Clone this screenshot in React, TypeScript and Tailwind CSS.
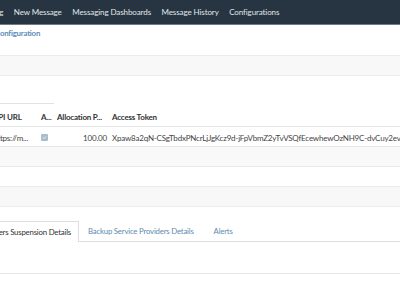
export default function App() {
  const navItems = ["New Message", "Messaging Dashboards", "Message History", "Configurations"];

  return (
    <div className="w-[400px] h-[284px] overflow-hidden bg-white font-['Lato',sans-serif] tracking-[-0.2px]">
      {/* Top nav */}
      <div className="h-[25px] bg-[#263541] border-b border-[#6d7c87] flex items-center gap-[10.5px] whitespace-nowrap text-[8px] tracking-[-0.1px] text-[#e1e7eb]">
        <span className="-ml-[33px]">Messaging</span>
        {navItems.map((item) => (
          <span key={item}>{item}</span>
        ))}
      </div>

      {/* Breadcrumb */}
      <div className="h-[30px] pt-[3px]">
        <span className="block -ml-[5px] text-[7.8px] font-bold text-[#5b8db8]">Configuration</span>
      </div>

      {/* Section header band */}
      <div className="h-[21px] bg-[#f8f8f8] border-y border-[#ececec]" />

      {/* Grid */}
      <div className="h-[28px] flex items-end">
        <div className="w-[54px] border-b border-[#e2e2e2]" />
      </div>
      <div className="-ml-[8px] whitespace-nowrap text-[8px] text-[#333]">
        <div className="grid grid-cols-[48px_16px_54px_1fr] h-[23px] pt-[3px] items-center border-b border-[#e6e6e6] font-bold">
          <span className="pl-[1px]">API URL</span>
          <span className="pl-[1px]">A...</span>
          <span className="pl-[1px]">Allocation P...</span>
          <span className="pl-[2px]">Access Token</span>
        </div>
        <div className="grid grid-cols-[48px_16px_54px_1fr] h-[20px] pt-[2px] items-center border-b border-[#e6e6e6] text-[#444]">
          <span className="pl-[1px]">https://m...</span>
          <span className="pl-[1px] flex">
            <span className="w-[7px] h-[7px] rounded-[1px] bg-[#a9bccb] flex items-center justify-center">
              <svg width="5" height="5" viewBox="0 0 10 10">
                <path d="M2 5 L4 7 L8 3" stroke="white" strokeWidth="1.6" fill="none" />
              </svg>
            </span>
          </span>
          <span className="text-right pr-[3px]">100.00</span>
          <span className="pl-[2px] overflow-hidden">Xpaw8a2qN-CSgTbdxPNcrLjJgKcz9d-jFpVbmZ2yTvVSQfEcewhewOzNH9C-dvCuy2evSlK</span>
        </div>
      </div>
      <div className="h-[20px] bg-[#f9f9f9] border-b border-[#e8e8e8]" />
      <div className="h-[19px]" />
      <div className="h-[21px] bg-[#f8f8f8] border-y border-[#ececec]" />
      <div className="h-[14px]" />

      {/* Tabs */}
      <div className="flex h-[21px] whitespace-nowrap text-[7.8px]">
        <div className="-ml-[30px] pl-[8px] pr-[7px] pt-[1px] flex items-center bg-white border-t border-r border-[#dddddd] text-[#333]">
          Providers Suspension Details
        </div>
        <div className="flex-1 flex items-center gap-[20px] pl-[9px] pt-[1px] border-b border-[#dddddd] text-[#5d8bb0]">
          <span>Backup Service Providers Details</span>
          <span>Alerts</span>
        </div>
      </div>
      <div className="h-[32px] border-b border-[#e8e8e8]" />
    </div>
  );
}
